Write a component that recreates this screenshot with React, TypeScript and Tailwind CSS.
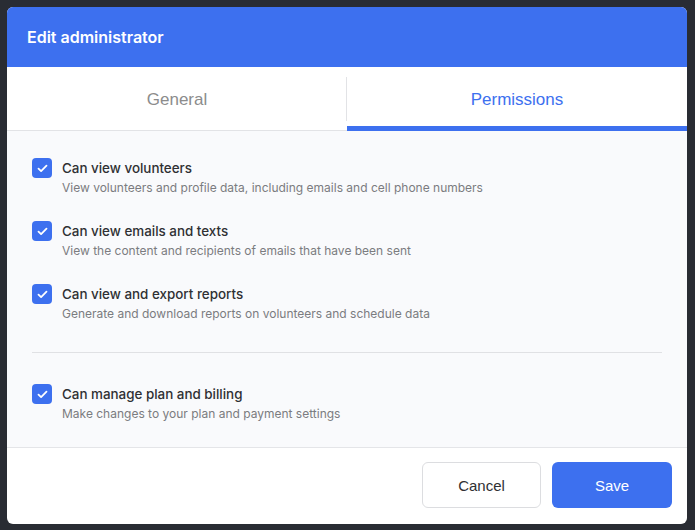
import React from 'react';

const permissions = [
    { title: 'Can view volunteers', desc: 'View volunteers and profile data, including emails and cell phone numbers' },
    { title: 'Can view emails and texts', desc: 'View the content and recipients of emails that have been sent' },
    { title: 'Can view and export reports', desc: 'Generate and download reports on volunteers and schedule data' },
];

const Check = () => (
    <div className="w-5 h-5 shrink-0 rounded-[4px] bg-[#3d70ef] flex items-center justify-center">
        <svg width="11" height="9" viewBox="0 0 11 9" fill="none">
            <path d="M1.5 4.6L4.1 7.1L9.5 1.7" stroke="white" strokeWidth="1.8" strokeLinecap="round" strokeLinejoin="round" />
        </svg>
    </div>
);

const PermissionRow = ({ title, desc }: { title: string; desc: string }) => (
    <div className="flex gap-[10px] h-[63px]">
        <Check />
        <div className="flex flex-col">
            <span className="text-[13.4px] leading-[20px] font-medium text-[#2f3033]">{title}</span>
            <span className="text-[12px] leading-[18px] text-[#7b7c80] mt-[1px]">{desc}</span>
        </div>
    </div>
);

export default function App() {
    return (
        <div className="w-[695px] h-[530px] bg-[#292c33] p-[7px] pr-[8px] pb-[6px]" style={{ fontFamily: 'Inter, "Noto Sans", sans-serif' }}>
            <div className="h-full rounded-[6px] overflow-hidden bg-white flex flex-col">
                {/* Header */}
                <div className="h-[60px] shrink-0 bg-[#3d70ef] flex items-center px-5">
                    <h1 className="text-white text-[16px] font-semibold">Edit administrator</h1>
                </div>

                {/* Tabs */}
                <div className="h-[64px] shrink-0 flex" style={{ fontFamily: '"Liberation Sans", Arial, sans-serif' }}>
                    <button className="flex-1 flex items-center justify-center text-[17px] text-[#8c8c8c] border-b border-[#e2e3e6] relative pt-[2px]">
                        General
                        <span className="absolute right-0 top-[10px] bottom-[9px] w-px bg-[#e2e3e6]" />
                    </button>
                    <button className="flex-1 flex items-center justify-center text-[17px] text-[#3d70ef] border-b-[5px] border-[#3d70ef] pt-[6px]">
                        Permissions
                    </button>
                </div>

                {/* Content */}
                <div className="flex-1 bg-[#f9fafc] border-b border-[#e4e5e8] px-[25px] pt-[27px]">
                    {permissions.map(p => (
                        <PermissionRow key={p.title} {...p} />
                    ))}
                    <div className="h-px bg-[#e0e1e4] mt-[5px] mb-[31px]" />
                    <PermissionRow title="Can manage plan and billing" desc="Make changes to your plan and payment settings" />
                </div>

                {/* Footer */}
                <div className="h-[76px] shrink-0 flex items-center justify-end gap-[11px] px-[15px] pb-[2px]" style={{ fontFamily: '"Liberation Sans", Arial, sans-serif' }}>
                    <button className="w-[119px] h-[46px] rounded-[6px] border border-[#dcdde0] bg-white text-[15px] text-[#2f3033] pt-[3px]">Cancel</button>
                    <button className="w-[120px] h-[46px] rounded-[6px] bg-[#3d70ef] text-[15px] text-white pt-[3px]">Save</button>
                </div>
            </div>
        </div>
    );
}
